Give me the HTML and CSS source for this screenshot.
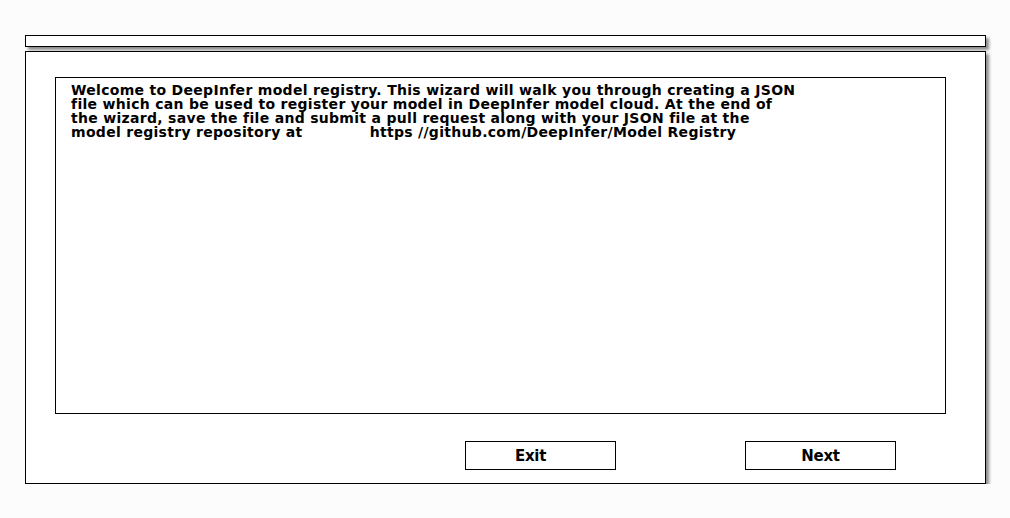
FILE: index.html
```html
<!DOCTYPE html>
<html>
<head>
<meta charset="utf-8">
<link rel="stylesheet" href="styles.css">
</head>
<body>
<div class="app">
  <div class="topbar"></div>
  <div class="panel">
    <div class="textbox">
      <p class="intro">Welcome to DeepInfer model registry. This wizard will walk you through creating a JSON<br>file which can be used to register your model in DeepInfer model cloud. At the end of<br>the wizard, save the file and submit a pull request along with your JSON file at the<br>model registry repository at <span class="link">https //github.com/DeepInfer/Model Registry</span></p>
    </div>
    <div class="actions">
      <button class="btn btn-exit">Exit</button>
      <button class="btn">Next</button>
    </div>
  </div>
</div>
</body>
</html>
```
FILE: styles.css
```css
html, body {
  margin: 0;
  padding: 0;
  background: #fcfcfc;
}
body {
  font-family: "DejaVu Sans", sans-serif;
}
.app {
  padding: 35px 24px 0 25px;
  display: flex;
  flex-direction: column;
  gap: 4px;
}
.topbar {
  height: 10px;
  border: 1px solid #000;
  background: #fff;
  box-shadow: 3px 3px 3px rgba(0,0,0,0.45);
}
.panel {
  height: 406px;
  border: 1px solid #000;
  background: #fff;
  box-shadow: 3px 3px 3px rgba(0,0,0,0.45);
  padding: 25px 39px 0 29px;
  box-sizing: content-box;
  display: flex;
  flex-direction: column;
}
.textbox {
  height: 330px;
  border: 1px solid #000;
  padding: 5px 15px 0 15px;
  box-sizing: content-box;
  flex: none;
}
.intro {
  margin: 0;
  font-size: 14px;
  font-weight: bold;
  letter-spacing: 0.3px;
  line-height: 14px;
  color: #000;
}
.link {
  margin-left: 62px;
}
.actions {
  display: flex;
  justify-content: flex-end;
  gap: 129px;
  padding-right: 50px;
  margin-top: 27px;
}
.btn {
  width: 151px;
  height: 29px;
  border: 1px solid #000;
  background: #fff;
  font-family: "DejaVu Sans", sans-serif;
  font-size: 15px;
  font-weight: bold;
  letter-spacing: -0.3px;
  color: #000;
  padding: 0;
  margin: 0;
}
.btn-exit {
  padding-right: 20px;
}
```
